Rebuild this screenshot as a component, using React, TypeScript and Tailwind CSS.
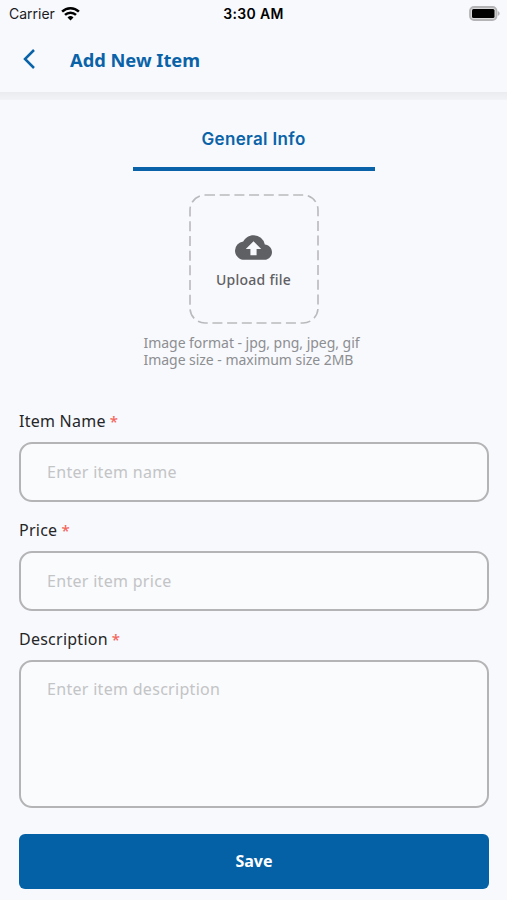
import { MdCloudUpload } from 'react-icons/md'

interface FieldProps {
  label: string
  placeholder: string
  multiline?: boolean
}

const Field = ({ label, placeholder, multiline }: FieldProps) => {
  const box =
    'mt-[10px] block w-full resize-none rounded-[13px] border-2 border-[#b4b4b6] bg-[#fafbfd] px-[26px] text-[16px] tracking-[0.3px] text-[#222] outline-none placeholder:text-[#c3c4c6] placeholder:opacity-100'

  return (
    <label className="block">
      <span className="flex h-[22px] items-center text-[16px] leading-[22px] text-[#252628]">
        <span className="tracking-[0.25px]">{label}</span>
        <span className="ml-[4px] text-[15px] font-medium text-[#f4665c]">*</span>
      </span>
      {multiline ? (
        <textarea placeholder={placeholder} className={`${box} h-[148px] pt-[16px] leading-[22px]`} />
      ) : (
        <input placeholder={placeholder} className={`${box} h-[60px] pb-px`} />
      )}
    </label>
  )
}

const StatusBar = () => (
  <div className="grid h-7 grid-cols-3 items-center pb-[2px] pl-[9px] pr-[7px] font-['Inter',sans-serif] text-[14px] text-[#1b1b1d]">
    <div className="flex items-center gap-[6px]">
      <span>Carrier</span>
      {/* Wifi */}
      <svg width="19" height="15" viewBox="0 0 19 15" fill="none" stroke="#000" strokeWidth="2.5">
        <path d="M1.1 5.6a12 12 0 0 1 16.8 0" />
        <path d="M4 8.9a8 8 0 0 1 11 0" />
        <path d="M9.5 14.4 6.5 11.4a4.4 4.4 0 0 1 6 0z" fill="#000" stroke="none" />
      </svg>
    </div>
    <span className="-ml-[2px] text-center font-semibold tracking-[0.3px] text-black">3:30 AM</span>
    {/* Battery */}
    <svg className="justify-self-end" width="31" height="15" viewBox="0 0 31 15">
      <rect x="1" y="1" width="26.5" height="13" rx="4" fill="#d8d8da" stroke="#b4b4b6" strokeWidth="1.8" />
      <rect x="3" y="3" width="22.5" height="9" rx="1.5" fill="#000" />
      <path d="M28.8 5v5c1-.4 1.9-1.4 1.9-2.5S29.8 5.4 28.8 5z" fill="#b4b4b6" />
    </svg>
  </div>
)

export default function App() {
  return (
    <div className="flex h-[900px] w-[507px] flex-col overflow-hidden bg-[#f8f9fd] font-['Noto_Sans',sans-serif]">
      <StatusBar />

      {/* Header */}
      <header className="flex h-16 items-center pb-px pl-[23px]">
        <button className="flex w-[47px] pb-[2px]">
          <svg width="13" height="20" viewBox="0 0 13 20" fill="none" stroke="#0a63a8" strokeWidth="2.5">
            <path d="M11 1 2 10l9 9" />
          </svg>
        </button>
        <h1 className="text-[18.3px] font-bold text-[#0a63a8]">Add New Item</h1>
      </header>
      <div className="h-2 shrink-0 bg-linear-to-b from-[#ebecef] to-[#f2f3f6]" />

      {/* Tab */}
      <div className="mx-auto flex h-[71px] w-[242px] items-center justify-center border-b-[4px] border-[#0a63a8] pt-[12px] font-['Inter',sans-serif] text-[17px] font-semibold tracking-[0.35px] text-[#0a63a8]">
        General Info
      </div>

      {/* Upload */}
      <div className="mt-[23px] flex flex-col items-center">
        <button className="relative flex h-[130px] w-[130px] flex-col items-center pt-[35px] text-[#5f6063]">
          <svg className="absolute inset-0" width="130" height="130" fill="none">
            <rect x="1" y="1" width="128" height="128" rx="15" stroke="#b9babc" strokeWidth="1.6" strokeDasharray="10 4.7" />
          </svg>
          <MdCloudUpload size={37} />
          <span className="mt-[4px] text-[14px] font-medium leading-5 tracking-[0.25px]">Upload file</span>
        </button>
        <p className="mt-[10px] w-[220px] whitespace-nowrap text-[14px] leading-[17px] tracking-[-0.04px] text-[#8d8e91]">
          Image format - jpg, png, jpeg, gif
          <br />
          Image size - maximum size 2MB
        </p>
      </div>

      {/* Form */}
      <form className="mt-[42px] flex flex-col gap-[17px] pl-[19px] pr-[18px]">
        <Field label="Item Name" placeholder="Enter item name" />
        <Field label="Price" placeholder="Enter item price" />
        <Field label="Description" placeholder="Enter item description" multiline />
        <button
          type="button"
          className="mt-[9px] h-[55px] rounded-[6px] bg-[#0461a6] pb-px text-[16px] font-bold text-white"
        >
          Save
        </button>
      </form>
    </div>
  )
}
